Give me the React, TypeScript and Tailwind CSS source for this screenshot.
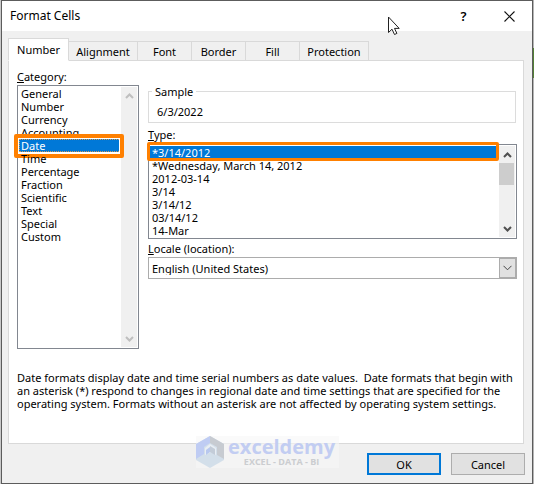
import { useState } from 'react';

const tabs = [
  { label: 'Number', width: 'w-[61px]' },
  { label: 'Alignment', width: 'w-[70px]' },
  { label: 'Font', width: 'w-[55px]' },
  { label: 'Border', width: 'w-[55px]' },
  { label: 'Fill', width: 'w-[55px]' },
  { label: 'Protection', width: 'w-[70px]' },
];

const categories = [
  'General',
  'Number',
  'Currency',
  'Accounting',
  'Date',
  'Time',
  'Percentage',
  'Fraction',
  'Scientific',
  'Text',
  'Special',
  'Custom',
];

const types = [
  '*3/14/2012',
  '*Wednesday, March 14, 2012',
  '2012-03-14',
  '3/14',
  '3/14/12',
  '03/14/12',
  '14-Mar',
];

function Chevron({ up = false }: { up?: boolean }) {
  return (
    <svg viewBox="0 0 9 6" className="h-[6px] w-[9px]" fill="none" stroke="currentColor" strokeWidth="2">
      <path d={up ? 'M1 5 4.500 1.500 8 5' : 'M1 1 4.500 4.500 8 1'} />
    </svg>
  );
}

function ScrollBar({ thumb = false }: { thumb?: boolean }) {
  const tone = thumb ? 'text-[#505050]' : 'text-[#bfbfbf]';
  return (
    <div className="flex w-4 shrink-0 flex-col bg-[#f0f0f0]">
      <button type="button" aria-label="Scroll up" className={`flex h-[17px] items-center justify-center ${tone}`}>
        <Chevron up />
      </button>
      {thumb && <div className="h-[22px] w-[15px] bg-[#cdcdcd]" />}
      <button type="button" aria-label="Scroll down" className={`mt-auto flex h-[17px] items-center justify-center ${tone}`}>
        <Chevron />
      </button>
    </div>
  );
}

function Watermark() {
  return (
    <div className="absolute bottom-[15px] left-[194px] flex h-8 w-[143px] items-center gap-1 bg-[#f6f6f6]/60">
      <svg viewBox="0 0 28 32" className="h-8 w-7 shrink-0">
        <path d="M14 0 28 8v16l-14 8L0 24V8z" fill="#d3dfea" />
        <path d="M14 0 0 8v15l8-5v-7l6-4z" fill="#bfccf3" />
        <path d="M14 0v7l7 4v8l7 4V8z" fill="#c7cbd1" />
        <path d="m9 12 5-4 6 4v7l-5-3-6 3z" fill="#e9eef4" />
        <path d="m14 10 5 3v6l-5-3z" fill="#c3ccd8" />
        <path d="m14 11-4 3v5l4-3z" fill="#b8c8ee" />
      </svg>
      <div className="flex flex-col items-center font-['Open_Sans',sans-serif] font-bold">
        <span className="text-[20px] leading-[20px] text-[#c2cdf2]">exceldemy</span>
        <span className="text-[9px] leading-[10px] whitespace-nowrap text-[#cbcdd0]">EXCEL - DATA - BI</span>
      </div>
    </div>
  );
}

export default function App() {
  const [tab, setTab] = useState('Number');
  const [category, setCategory] = useState('Date');
  const [type, setType] = useState('*3/14/2012');

  return (
    <div className="flex min-h-screen bg-[#c9c9c9] font-['Noto_Sans','Open_Sans',sans-serif] text-[11px] leading-[13px] text-black">
      <div className="w-px bg-[#c9c9c9]" />
      <div
        role="dialog"
        aria-labelledby="dialog-title"
        className="relative flex min-w-0 flex-1 flex-col border border-[#5c5c5c] bg-[#f0f0f0]"
      >
        <header className="flex h-[30px] items-center bg-white pl-2">
          <h1 id="dialog-title" className="flex-1 text-[12px] leading-4">Format Cells</h1>
          <button type="button" aria-label="Help" className="w-[45px] text-[13px] leading-4 font-semibold">?</button>
          <button type="button" aria-label="Close" className="flex w-[46px] justify-center">
            <svg viewBox="0 0 11 11" className="h-[11px] w-[11px]" stroke="#111" strokeWidth="1.1">
              <path d="m.5.5 10 10M10.500.5l-10 10" />
            </svg>
          </button>
        </header>

        {/* Mouse pointer */}
        <svg viewBox="0 0 12 20" className="absolute top-[15px] left-[386px] h-5 w-3">
          <path d="M.5 1v15.500l3.500-3.300 2.500 5.300 2.400-1.100-2.400-5h4.700z" fill="#fff" stroke="#222" strokeWidth="1" />
        </svg>

        <main className="flex flex-1 flex-col pt-[7px] pr-2 pl-[6px]">
          <div role="tablist" className="z-10 -mb-px flex items-end">
            {tabs.map(({ label, width }, i) => (
              <button
                key={label}
                type="button"
                role="tab"
                aria-selected={tab === label}
                onClick={() => setTab(label)}
                className={`border border-[#d9d9d9] ${width} ${i > 0 ? '-ml-px' : ''} ${
                  tab === label ? 'z-10 h-[23px] border-b-white bg-white' : 'h-5'
                }`}
              >
                {label}
              </button>
            ))}
          </div>

          <section role="tabpanel" className="flex flex-1 flex-col border border-[#d9d9d9] bg-white pt-[9px] pr-[6px] pl-2">
            <div className="flex gap-[9px]">
              <div className="flex w-[122px] shrink-0 flex-col">
                <span id="category-label"><u>C</u>ategory:</span>
                <div className="mt-[2px] flex h-[264px] border border-[#828790] p-px">
                  <ul role="listbox" aria-labelledby="category-label" className="flex-1">
                    {categories.map((item) => (
                      <li
                        key={item}
                        role="option"
                        aria-selected={category === item}
                        onClick={() => setCategory(item)}
                        className={`relative pl-[2px] ${
                          category === item ? 'bg-[#0078d7] text-white outline-1 -outline-offset-1 outline-dotted outline-[#d99b52]' : ''
                        }`}
                      >
                        {item}
                        {category === item && (
                          <span className="absolute -top-[5px] -left-[5px] h-[24px] w-[110px] rounded-[2px] border-4 border-[#ff8000] outline-1 -outline-offset-[5px] outline-white" />
                        )}
                      </li>
                    ))}
                  </ul>
                  <ScrollBar />
                </div>
              </div>

              <div className="flex min-w-0 flex-1 flex-col pt-[15px]">
                <fieldset className="mr-px h-[38px] border border-[#dcdcdc] pl-2">
                  <legend className="-ml-[5px] px-[3px]">Sample</legend>
                  <output className="block pt-[7px]">6/3/2022</output>
                </fieldset>

                <span id="type-label" className="mt-[5px]"><u>T</u>ype:</span>
                <div className="mt-[3px] flex h-[95px] border border-[#828790] p-px">
                  <ul role="listbox" aria-labelledby="type-label" className="min-w-0 flex-1">
                    {types.map((item) => (
                      <li
                        key={item}
                        role="option"
                        aria-selected={type === item}
                        onClick={() => setType(item)}
                        className={`relative pl-[2px] ${type === item ? 'bg-[#0078d7] text-white' : ''}`}
                      >
                        {item}
                        {type === item && (
                          <span className="absolute -top-1 right-0 -bottom-[2px] -left-[3px] rounded-[2px] border-3 border-[#ff8000]" />
                        )}
                      </li>
                    ))}
                  </ul>
                  <ScrollBar thumb />
                </div>

                <label htmlFor="locale" className="mt-[3px]"><u>L</u>ocale (location):</label>
                <div className="relative mt-[2px] flex">
                  <select
                    id="locale"
                    className="h-[22px] flex-1 appearance-none border border-[#acacac] bg-white pl-[3px]"
                  >
                    <option>English (United States)</option>
                  </select>
                  <span className="pointer-events-none absolute inset-y-px right-px flex w-[17px] items-center justify-center border border-[#acacac] bg-[#e1e1e1] text-[#444]">
                    <svg viewBox="0 0 9 6" className="h-[6px] w-[9px]" fill="none" stroke="currentColor">
                      <path d="m.5.8 4 4 4-4" />
                    </svg>
                  </span>
                </div>
              </div>
            </div>

            <p className="mt-[22px]">
              Date formats display date and time serial numbers as date values.&nbsp; Date formats that begin with an
              asterisk (*) respond to changes in regional date and time settings that are specified for the operating
              system. Formats without an asterisk are not affected by operating system settings.
            </p>
          </section>
        </main>

        <footer className="flex justify-end gap-[10px] px-[7px] pt-[9px] pb-2">
          <button type="button" className="h-[22px] w-[74px] border-2 border-[#0078d7] bg-[#e1e1e1]">OK</button>
          <button type="button" className="h-[22px] w-[74px] border border-[#adadad] bg-[#e1e1e1]">Cancel</button>
        </footer>

        <Watermark />
      </div>
      <div className="flex w-px flex-col bg-[#b5b5b5] pt-12">
        <div className="h-[30px] bg-[#538135]" />
      </div>
    </div>
  );
}
